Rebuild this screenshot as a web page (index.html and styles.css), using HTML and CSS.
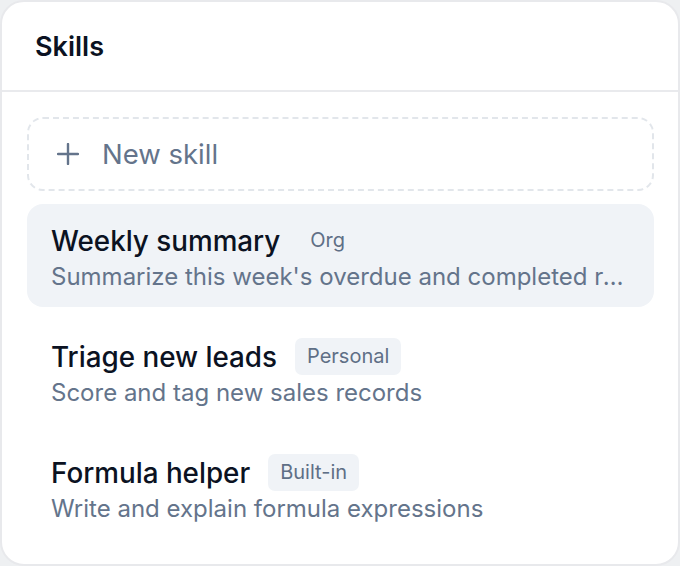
FILE: index.html
```html
<!DOCTYPE html>
<html>
<head>
<meta charset="utf-8">
<link rel="stylesheet" href="styles.css">
</head>
<body>
<div class="card">
  <div class="header"><h1 class="title">Skills</h1></div>
  <div class="content">
    <button class="new-skill">
      <svg class="plus" width="22" height="22" viewBox="0 0 22 22"><path d="M11 1v20M1 11h20" stroke="currentColor" stroke-width="2.4" stroke-linecap="round" fill="none"/></svg>
      <span>New skill</span>
    </button>
    <div class="row active">
      <div class="row-head"><span class="name">Weekly summary</span><span class="badge">Org</span></div>
      <div class="desc">Summarize this week's overdue and completed records for the team</div>
    </div>
    <div class="row">
      <div class="row-head"><span class="name">Triage new leads</span><span class="badge">Personal</span></div>
      <div class="desc">Score and tag new sales records</div>
    </div>
    <div class="row">
      <div class="row-head"><span class="name">Formula helper</span><span class="badge">Built-in</span></div>
      <div class="desc">Write and explain formula expressions</div>
    </div>
  </div>
</div>
</body>
</html>
```
FILE: styles.css
```css
html, body { margin: 0; padding: 0; }
body {
  background: #eef0f2;
  font-family: Inter, "Noto Sans", sans-serif;
}
.card {
  box-sizing: border-box;
  width: 680px;
  height: 566px;
  background: #fff;
  border: 2px solid #e8e9ec;
  border-radius: 24px;
  overflow: hidden;
}
.header {
  height: 88px;
  border-bottom: 2px solid #e9eaed;
  display: flex;
  align-items: center;
  padding-left: 33px;
}
.title {
  margin: 0;
  font-size: 27px;
  font-weight: 600;
  color: #0b1222;
}
.content {
  padding: 25px 24px 0 25px;
  display: flex;
  flex-direction: column;
  gap: 13px;
}
.new-skill {
  box-sizing: border-box;
  height: 74px;
  border: 2px dashed #e2e6eb;
  border-radius: 16px;
  background: #fff;
  display: flex;
  align-items: center;
  gap: 23px;
  padding: 0 0 0 28px;
  font-family: inherit;
  font-size: 27.5px;
  color: #64748b;
  text-align: left;
}
.plus { display: block; }
.row {
  box-sizing: border-box;
  height: 103px;
  border-radius: 16px;
  padding: 18px 24px 0 24px;
}
.row.active { background: #f0f3f7; }
.row-head {
  display: flex;
  align-items: center;
  gap: 18px;
  height: 37px;
}
.name {
  font-size: 27.8px;
  font-weight: 500;
  color: #0b1222;
}
.badge {
  font-size: 20px;
  color: #5f6f86;
  background: #f0f3f7;
  border-radius: 7px;
  padding: 0 12px;
  height: 37px;
  line-height: 37px;
}
.desc {
  margin-top: 2px;
  font-size: 24px;
  color: #64748b;
  line-height: 32px;
  white-space: nowrap;
  overflow: hidden;
  text-overflow: ellipsis;
}
```
